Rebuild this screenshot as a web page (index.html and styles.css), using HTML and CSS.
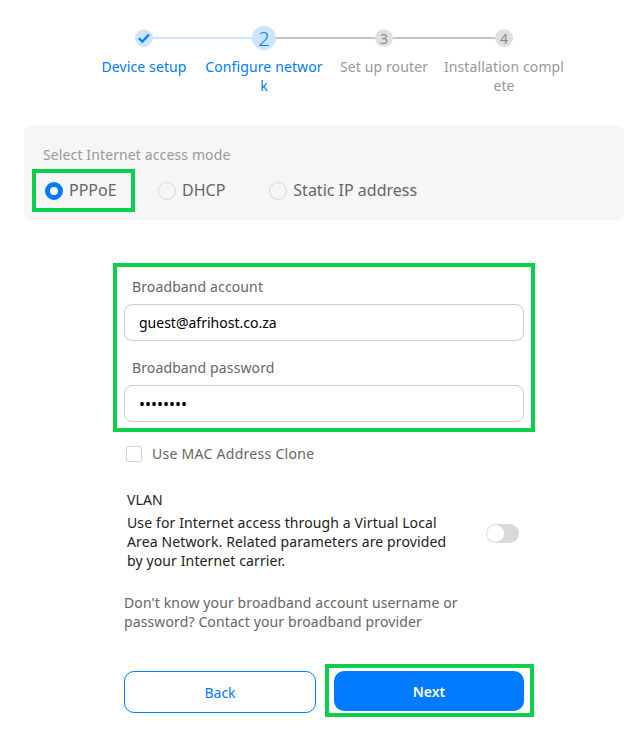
FILE: index.html
```html
<!DOCTYPE html>
<html>
    <head>
        <title>Configure network</title>
        <link rel="stylesheet" href="styles.css">
    </head>
    <body>
        <div class="steps">
            <div class="step done">
                <div class="step_head">
                    <span class="dot">
                        <svg width="14" height="14" viewBox="0 0 14 14"><path d="M1.8 7.2 L5.4 10.6 L12 3.6" fill="none" stroke="#007aff" stroke-width="2.2"/></svg>
                    </span>
                </div>
                <div class="step_name">Device setup</div>
            </div>
            <div class="step active">
                <div class="step_head"><span class="dot">2</span></div>
                <div class="step_name">Configure network</div>
            </div>
            <div class="step">
                <div class="step_head"><span class="dot">3</span></div>
                <div class="step_name">Set up router</div>
            </div>
            <div class="step">
                <div class="step_head"><span class="dot">4</span></div>
                <div class="step_name">Installation complete</div>
            </div>
        </div>

        <div class="mode_card">
            <div class="mode_title">Select Internet access mode</div>
            <div class="mode_row">
                <div class="mode_item picked marked"><span class="radio"></span>PPPoE</div>
                <div class="mode_item dhcp"><span class="radio"></span>DHCP</div>
                <div class="mode_item"><span class="radio"></span>Static IP address</div>
            </div>
        </div>

        <form class="form_box marked">
            <label class="field_label" for="account">Broadband account</label>
            <input class="field" id="account" type="text" value="guest@afrihost.co.za">
            <label class="field_label" for="password">Broadband password</label>
            <input class="field pass" id="password" type="password" value="12345678">
        </form>

        <div class="clone_row"><span class="check"></span>Use MAC Address Clone</div>

        <div class="vlan">
            <div class="vlan_title">VLAN</div>
            <div class="vlan_row">
                <div class="vlan_text">Use for Internet access through a Virtual Local Area Network. Related parameters are provided by your Internet carrier.</div>
                <span class="toggle"><span class="knob"></span></span>
            </div>
        </div>

        <p class="help">Don't know your broadband account username or password? Contact your broadband provider</p>

        <div class="buttons">
            <button class="btn back" type="button">Back</button>
            <div class="next_box marked"><button class="btn next" type="button">Next</button></div>
        </div>
    </body>
</html>
```

FILE: styles.css
```css
* {
    box-sizing: border-box;
}
body {
    margin: 0;
    height: 732px;
    overflow: hidden;
    background: #fff;
    font-family: "Noto Sans", "Open Sans", sans-serif;
    font-size: 14px;
    line-height: 19px;
    letter-spacing: 0.12px;
    color: #666;
}
.marked {
    border: 4px solid #0ecf4a;
}

/* steps */
.steps {
    display: grid;
    grid-template-columns: repeat(4, 120px);
    width: 480px;
    margin: 26px 0 0 84px;
}
.step {
    position: relative;
    text-align: center;
    color: #999;
}
.step:not(:last-child)::after {
    content: "";
    position: absolute;
    left: 60px;
    top: 11px;
    width: 120px;
    height: 2px;
    background: #c4c4cc;
}
.step.done::after {
    background: #cce4ff;
}
.step_head {
    position: relative;
    z-index: 1;
    display: flex;
    align-items: center;
    justify-content: center;
    height: 24px;
}
.dot {
    display: flex;
    align-items: center;
    justify-content: center;
    width: 18px;
    height: 18px;
    border-radius: 50%;
    background: #e0e0e0;
    font-size: 14px;
    color: #888;
}
.step.done .dot {
    background: #cce4ff;
}
.step.active .dot {
    width: 24px;
    height: 24px;
    background: #cce4ff;
    font-size: 20px;
    font-weight: 300;
    color: #007aff;
}
.step_name {
    margin: 7px -1px 0 -1px;
    word-break: break-all;
}
.step.done .step_name, .step.active .step_name {
    color: #007aff;
}

/* access mode */
.mode_card {
    width: 600px;
    height: 95px;
    margin: 30px 0 0 24px;
    padding: 20px 8px 0 8px;
    border-radius: 8px;
    background: #f6f6f6;
}
.mode_title {
    margin-left: 11px;
    color: #999;
}
.mode_row {
    display: flex;
    align-items: center;
    margin-top: 5px;
    font-size: 16px;
    letter-spacing: 0;
}
.mode_item {
    display: flex;
    align-items: center;
    gap: 6px;
}
.mode_item.picked {
    width: 103px;
    height: 43px;
    padding-left: 9px;
    margin-right: 23px;
}
.mode_item.dhcp {
    margin-right: 44px;
}
.radio {
    width: 18px;
    height: 18px;
    border: 1px solid #d8d8d8;
    border-radius: 50%;
}
.picked .radio {
    border: 5px solid #007aff;
    background: #fff;
}

/* account form */
.form_box {
    display: block;
    width: 422px;
    height: 169px;
    margin: 43px 0 0 113px;
    padding: 10px 7px 0 7px;
}
.field_label {
    display: block;
    margin-left: 8px;
    height: 27px;
}
.field {
    display: block;
    width: 400px;
    height: 37px;
    margin-bottom: 17px;
    padding: 0 14px;
    border: 1px solid #ccc;
    border-radius: 8px;
    outline: none;
    font-family: inherit;
    font-size: 14px;
    color: #000;
}
.field.pass {
    font-size: 16px;
}
.clone_row {
    display: flex;
    align-items: center;
    gap: 10px;
    margin: 12px 0 0 126px;
    letter-spacing: 0.28px;
}
.check {
    width: 16px;
    height: 16px;
    border: 1px solid #d0d0d0;
    border-radius: 3px;
}

/* vlan */
.vlan {
    margin: 27px 0 0 127px;
    width: 392px;
    color: #222;
}
.vlan_row {
    display: flex;
    align-items: flex-start;
    justify-content: space-between;
    margin-top: 4px;
}
.vlan_text {
    width: 326px;
}
.toggle {
    display: block;
    width: 33px;
    height: 19px;
    margin-top: 11px;
    padding: 1px;
    border-radius: 10px;
    background: #d9d9d9;
}
.knob {
    display: block;
    width: 17px;
    height: 17px;
    border-radius: 50%;
    background: #fff;
}
.help {
    width: 400px;
    margin: 23px 0 0 124px;
}

/* buttons */
.buttons {
    display: flex;
    align-items: flex-start;
    margin: 33px 0 0 124px;
}
.btn {
    border-radius: 10px;
    font-family: inherit;
    font-size: 14px;
    color: #007aff;
}
.back {
    width: 192px;
    height: 42px;
    margin-top: 7px;
    border: 1px solid #007aff;
    background: #fff;
}
.next_box {
    width: 209px;
    height: 53px;
    margin-left: 9px;
    padding: 3px 5px;
}
.next {
    display: block;
    width: 190px;
    height: 40px;
    border: 0;
    background: #007aff;
    color: #fff;
    font-weight: 600;
}
```
